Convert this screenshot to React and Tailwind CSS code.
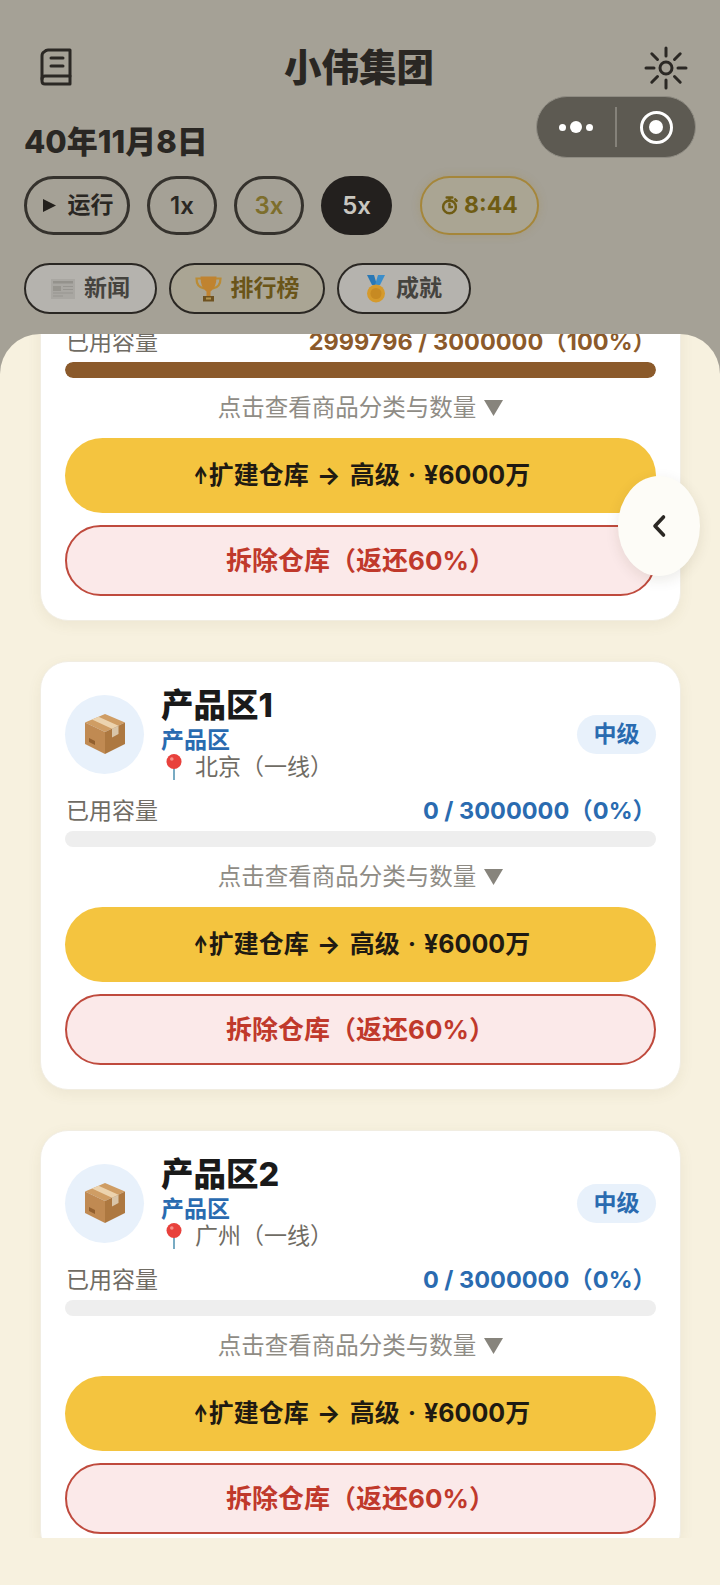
import React from "react";

const Book = () => (
  <svg width="32" height="38" viewBox="0 0 32 38" fill="none" stroke="#2b2824" strokeWidth="3" strokeLinejoin="round" strokeLinecap="round">
    <path d="M8 2 H30 V36 H5 Q2 36 2 33 V8 Q2 5 4 4 Q6 2 8 2 Z" />
    <path d="M2 31 Q2 28 5 28 H30" />
    <path d="M11 10 H23 M11 18 H23" />
  </svg>
);

const Gear = () => (
  <svg width="44" height="44" viewBox="0 0 44 44" fill="none" stroke="#2b2824" strokeWidth="3" strokeLinecap="round">
    <circle cx="22" cy="22" r="6" />
    <path d="M22 2 V10 M22 34 V42 M2 22 H10 M34 22 H42 M7.8 7.8 L13.5 13.5 M30.5 30.5 L36.2 36.2 M7.8 36.2 L13.5 30.5 M30.5 13.5 L36.2 7.8" />
  </svg>
);

const Paper = () => (
  <svg width="24" height="20" viewBox="0 0 24 20">
    <rect x="0" y="0" width="24" height="20" fill="#a9a7a2" />
    <rect x="2" y="2" width="20" height="2.5" fill="#94928c" />
    <rect x="2" y="7" width="8" height="5" fill="#97958f" />
    <path d="M12 7.5 H22 M12 10.5 H22 M2 14 H22 M2 17 H12" stroke="#979590" strokeWidth="1" />
  </svg>
);

const Trophy = () => (
  <svg width="27" height="26" viewBox="0 0 27 26">
    <path d="M6 2.5 H1.5 Q1.5 11 9 12.5 M21 2.5 H25.5 Q25.5 11 18 12.5" fill="none" stroke="#bb8c35" strokeWidth="2.2" />
    <path d="M5.5 0.5 H21.5 Q21.5 12 15.5 15.5 V20 H11.5 V15.5 Q5.5 12 5.5 0.5 Z" fill="#c08330" />
    <path d="M8 20 H19 V25.5 H8 Z" fill="#6f5220" />
    <rect x="11" y="21.5" width="5" height="2" fill="#b39550" />
  </svg>
);

const Medal = () => (
  <svg width="20" height="28" viewBox="0 0 20 28">
    <path d="M1 0 H8 L11 10 H6 Z" fill="#2a78b5" />
    <path d="M19 0 H12 L9 10 H14 Z" fill="#3b8ecb" />
    <circle cx="10" cy="18.5" r="9" fill="#d59a2c" />
    <circle cx="10" cy="18.5" r="5.5" fill="#c78a22" />
  </svg>
);

const Stopwatch = () => (
  <svg width="17" height="19" viewBox="0 0 18 20" fill="none" stroke="#6f5c13" strokeWidth="2.6">
    <circle cx="9" cy="11.5" r="6.8" />
    <path d="M6 1.5 H12 M9 1.5 V4.5 M9 8 V11.5 H11.5 M15 3.5 L16.5 5" strokeLinecap="round" />
  </svg>
);

const Box = () => (
  <svg width="40" height="40" viewBox="0 0 40 40">
    <path d="M20 0 L40 8.5 L20 18 L0 8.5 Z" fill="#cf9d64" />
    <path d="M0 8.5 L20 18 V40 L0 30 Z" fill="#c08a52" />
    <path d="M40 8.5 L20 18 V40 L40 30 Z" fill="#ad7840" />
    <path d="M7 5.5 L27 14.8 L33.5 11.8 L13.5 2.8 Z" fill="#ecd3ae" />
    <path d="M27 14.8 L33.5 11.8 V20 L27 23.5 Z" fill="#d9c5a8" />
    <path d="M4 24 L10 27 V31 L4 28 Z" fill="#93602e" />
  </svg>
);

const Pin = () => (
  <svg width="16" height="26" viewBox="0 0 16 26" className="ml-[5px] shrink-0">
    <path d="M8 12 V26" stroke="#6aa2bd" strokeWidth="1.8" />
    <circle cx="8" cy="7.5" r="7.5" fill="#e8413c" />
    <circle cx="5.8" cy="5" r="1.8" fill="#f58f88" />
  </svg>
);

function Capacity({ text, color, fill }) {
  return (
    <>
      <div className="mt-[13px] flex h-8 items-center justify-between pl-px text-[23px] leading-8">
        <span className="text-[#706c64]">已用容量</span>
        <span className={`text-[23.5px] font-bold ${color}`}>{text}</span>
      </div>
      <div className="mt-1 h-4 overflow-hidden rounded-full bg-[#eeeeee]">
        <div className={`h-full rounded-full ${fill}`} />
      </div>
      <div className="mt-[14px] flex h-8 items-center justify-center gap-[8px] text-[23.5px] leading-8 text-[#8f8c85]">
        <span>点击查看商品分类与数量</span>
        <svg width="19" height="16" viewBox="0 0 19 16"><path d="M0 0 H19 L9.5 16 Z" fill="#87847c" /></svg>
      </div>
      <button className="mt-[14px] flex h-[75px] w-full items-center justify-center rounded-full bg-[#f4c43f] text-[25px] font-bold text-[#1f1a12]">
        <span className="mr-[6px] inline-block w-[12px] scale-x-[0.6] text-center font-black">↑</span>
        <span>扩建仓库</span>
        <span className="ml-[8px] mr-[9px]">→</span>
        <span>高级</span>
        <span className="mx-[8px]">·</span>
        <span>¥6000万</span>
      </button>
      <button className="mt-3 flex h-[71px] w-full items-center justify-center rounded-full border-2 border-[#bf4a3d] bg-[#fbe9e9] text-[26px] font-bold text-[#c0392b]">
        拆除仓库（返还60%）
      </button>
    </>
  );
}

function Card({ title, place, text, color, fill }) {
  return (
    <section className="rounded-[28px] border border-[#f1ede2] bg-white px-6 pb-6 pt-6 shadow-[0_4px_14px_rgba(120,100,50,0.08)]">
      <div className="flex h-24 items-center">
        <div className="flex h-[79px] w-[79px] shrink-0 items-center justify-center rounded-full bg-[#e8f1fb]">
          <Box />
        </div>
        <div className="ml-[17px] flex min-w-0 flex-1 flex-col">
          <div className="h-9 text-[32.5px] font-extrabold leading-9 text-[#1a1a1a]">{title}</div>
          <div className="mt-0.5 h-7 text-[23px] font-bold leading-7 text-[#2a6bb0]">产品区</div>
          <div className="-mt-px flex h-7 items-center gap-[13px] text-[23px] leading-7 text-[#706c64]">
            <Pin />
            <span>{place}（一线）</span>
          </div>
        </div>
        <div className="flex h-[39px] w-[79px] items-center justify-center rounded-full bg-[#e8f1fb] text-[23px] font-bold text-[#2a6bb0]">
          中级
        </div>
      </div>
      <Capacity text={text} color={color} fill={fill} />
    </section>
  );
}

export default function App() {
  return (
    <div className="relative h-[1585px] w-[720px] overflow-hidden bg-[#a5a196] font-['Inter','Noto_Sans_CJK_SC',sans-serif] text-[#2a2723]">
      <header className="h-[334px] px-6">
        <div className="flex h-[134px] items-start justify-between pl-[16px] pr-[8px] pt-[46px]">
          <div className="pt-[2px]"><Book /></div>
          <h1 className="mt-px pl-[2px] text-[37.5px] font-black leading-[42px]">小伟集团</h1>
          <Gear />
        </div>
        <div className="-mt-[10px] h-9 text-[31px] font-extrabold leading-9">40年11月8日</div>
        <div className="mt-[16px] flex items-center gap-[17px] text-[24px] font-semibold">
          <div className="flex h-[59px] w-[106px] items-center justify-center gap-[12px] rounded-full border-[3px] border-[#35322d] pl-[2px] text-[23px]">
            <svg width="13" height="13" viewBox="0 0 13 13"><path d="M0 0 L13 6.5 L0 13 Z" fill="#23201c" /></svg>
            <span>运行</span>
          </div>
          <div className="flex h-[59px] w-[70px] items-center justify-center rounded-full border-[3px] border-[#35322d]">1x</div>
          <div className="flex h-[59px] w-[70px] items-center justify-center rounded-full border-[3px] border-[#35322d] text-[#7d6e2c]">3x</div>
          <div className="flex h-[59px] w-[71px] items-center justify-center rounded-full bg-[#23201e] text-[#c9c7c0]">5x</div>
          <div className="ml-[11px] flex h-[59px] w-[119px] items-center justify-center gap-[6px] rounded-full border-[2px] border-[#a5863a] bg-[#aaa593] text-[23px] font-bold text-[#6f5c13] shadow-[0_0_8px_rgba(165,134,58,0.25)]">
            <Stopwatch />
            <span>8:44</span>
          </div>
        </div>
        <div className="mt-7 flex items-center gap-3 text-[23px] font-bold">
          <div className="flex h-[51px] w-[133px] items-center justify-center gap-[9px] rounded-full border-2 border-[#2a2723] bg-[#b5b3ae] text-[#45433e]">
            <Paper /><span>新闻</span>
          </div>
          <div className="flex h-[51px] w-[156px] items-center justify-center gap-[9px] rounded-full border-2 border-[#2a2723] bg-[#aaa594] text-[#6a5519]">
            <Trophy /><span>排行榜</span>
          </div>
          <div className="flex h-[51px] w-[134px] items-center justify-center gap-[10px] rounded-full border-2 border-[#2a2723] bg-[#b5b3ae] text-[#45433e]">
            <Medal /><span>成就</span>
          </div>
        </div>
      </header>

      <main className="h-[1251px] rounded-t-[40px] bg-[#f7f1df] pb-[47px]">
        <div className="h-[1204px] overflow-hidden">
          <div className="-mt-[142px] flex flex-col gap-[40px] pl-[40px] pr-[39px]">
            <Card title="冷链区1" place="上海" text="2999796 / 3000000（100%）" color="text-[#8b5a2b]" fill="w-full bg-[#8b5a2b]" />
            <Card title="产品区1" place="北京" text="0 / 3000000（0%）" color="text-[#2a6bb0]" fill="w-0" />
            <Card title="产品区2" place="广州" text="0 / 3000000（0%）" color="text-[#2a6bb0]" fill="w-0" />
          </div>
        </div>
      </main>

      <div className="absolute left-[536px] top-[96px] flex h-[62px] w-[160px] items-center rounded-full border border-[#8f8c83] bg-[#5d5a52]">
        <div className="flex w-[78px] items-center justify-center gap-[4px]">
          <span className="h-[7px] w-[7px] rounded-full bg-white" />
          <span className="h-[12px] w-[12px] rounded-full bg-white" />
          <span className="h-[7px] w-[7px] rounded-full bg-white" />
        </div>
        <div className="h-[40px] w-[2px] bg-[#85827a]" />
        <div className="flex flex-1 items-center justify-center">
          <div className="flex h-[33px] w-[33px] items-center justify-center rounded-full border-[3px] border-white">
            <span className="h-[14px] w-[14px] rounded-full bg-white" />
          </div>
        </div>
      </div>

      <div className="absolute left-[618px] top-[476px] flex h-[100px] w-[82px] items-center justify-center rounded-[50%] bg-[#fdfcf7] shadow-[0_4px_14px_rgba(60,50,20,0.10)]">
        <svg width="16" height="24" viewBox="0 0 16 24" fill="none" stroke="#2b2824" strokeWidth="3.6" strokeLinecap="round" strokeLinejoin="round">
          <path d="M12.5 3 L4 12 L12.5 21" />
        </svg>
      </div>
    </div>
  );
}
